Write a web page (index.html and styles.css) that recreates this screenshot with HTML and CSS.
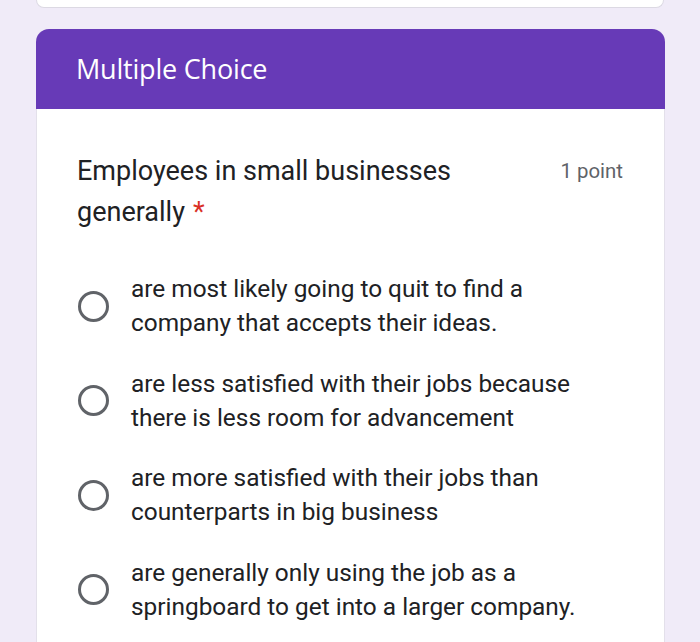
FILE: index.html
```html
<!DOCTYPE html>
<html lang="en">
<head>
<meta charset="utf-8">
<link rel="stylesheet" href="styles.css">
</head>
<body>
<div class="top-card"></div>
<div class="card">
  <div class="card-header">Multiple Choice</div>
  <div class="card-body">
    <div class="question">
      <div class="question-title">Employees in small businesses generally<span class="req">*</span></div>
      <div class="points">1 point</div>
    </div>
    <div class="options">
      <label class="option"><span class="radio"></span><span class="option-text">are most likely going to quit to find a company that accepts their ideas.</span></label>
      <label class="option"><span class="radio"></span><span class="option-text">are less satisfied with their jobs because there is less room for advancement</span></label>
      <label class="option"><span class="radio"></span><span class="option-text">are more satisfied with their jobs than counterparts in big business</span></label>
      <label class="option"><span class="radio"></span><span class="option-text">are generally only using the job as a springboard to get into a larger company.</span></label>
    </div>
  </div>
</div>
</body>
</html>
```
FILE: styles.css
```css
html, body {
  margin: 0;
  padding: 0;
  background: #f0ebf8;
  font-family: Roboto, "Liberation Sans", sans-serif;
  color: #202124;
  overflow: hidden;
}
.top-card {
  margin: 0 36px 0 36px;
  height: 7px;
  background: #fff;
  border: 1px solid #dcd9e3;
  border-top: none;
  border-radius: 0 0 11px 11px;
}
.card {
  margin: 21px 35px 0 36px;
  background: #fff;
  border-radius: 13px 13px 0 0;
  border-left: 1px solid #e3e0ea;
  border-right: 1px solid #e3e0ea;
  min-height: 700px;
}
.card-header {
  background: #673ab7;
  color: #fff;
  height: 80px;
  margin: 0 -1px;
  border-radius: 13px 13px 0 0;
  padding-left: 40px;
  padding-bottom: 2px;
  display: flex;
  align-items: center;
  font-size: 27px;
  letter-spacing: -0.2px;
  font-family: "Open Sans", Roboto, sans-serif;
  font-weight: 400;
  box-sizing: border-box;
}
.card-body {
  padding: 42px 41px 0 40px;
}
.question {
  display: flex;
  justify-content: space-between;
  align-items: flex-start;
}
.question-title {
  font-size: 27px;
  line-height: 41px;
  width: 400px;
}
.req {
  color: #d93025;
  margin-left: 8px;
}
.points {
  font-size: 20.4px;
  line-height: 41px;
  color: #5f6368;
}
.options {
  margin-top: 27px;
  display: flex;
  flex-direction: column;
}
.option {
  display: flex;
  align-items: center;
  padding: 13px 0;
  margin-top: -1px;
  margin-bottom: 1.5px;
}
.radio {
  width: 25px;
  height: 25px;
  border: 3.5px solid #606368;
  border-radius: 50%;
  flex: none;
  margin-left: 1px;
  margin-right: 22px;
}
.option-text {
  font-size: 24.4px;
  line-height: 34px;
  width: 470px;
}
```
